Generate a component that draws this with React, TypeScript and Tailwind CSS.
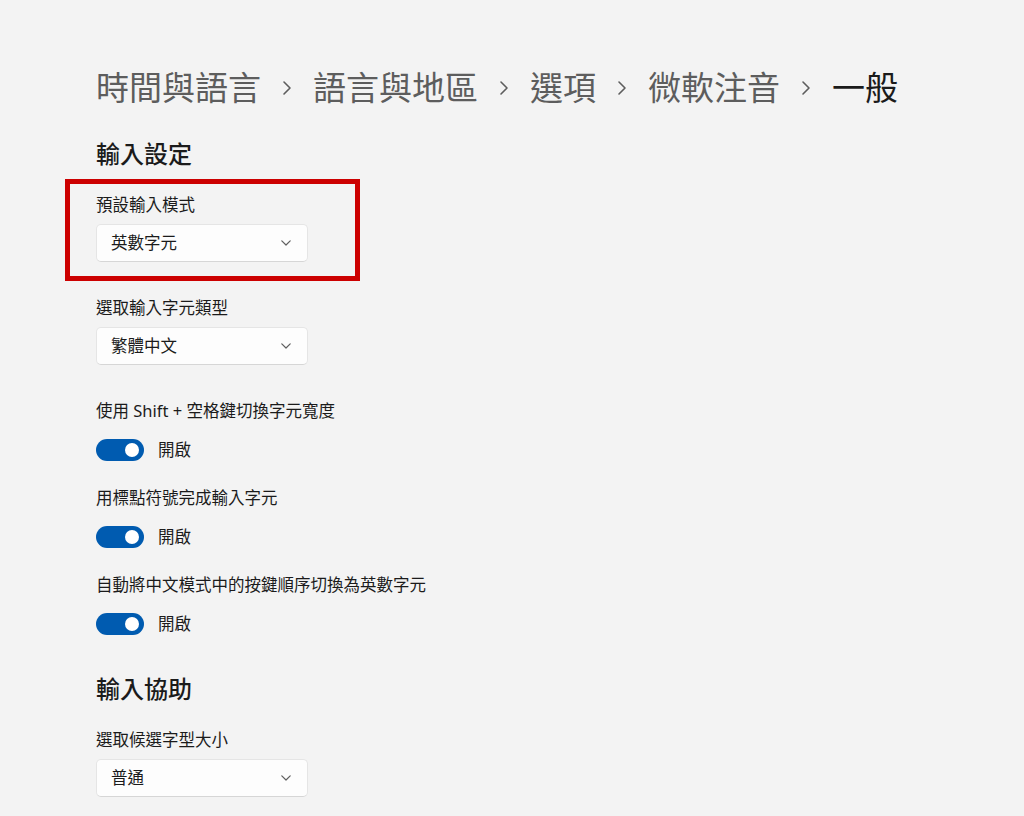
const font = "font-['Noto_Sans','Noto_Sans_CJK_TC',sans-serif]";

const Chevron = ({ className }: { className?: string }) => (
    <svg viewBox="0 0 10 16" className={className} fill="none" stroke="currentColor" strokeWidth="1.6" strokeLinecap="round" strokeLinejoin="round">
        <path d="M2 2l6 6-6 6" />
    </svg>
);

const Dropdown = ({ value }: { value: string }) => (
    <div className="mt-[7px] flex h-[38px] w-[212px] items-center justify-between rounded-[5px] border border-[#e5e5e5] border-b-[#d6d6d6] bg-[#fdfdfd] pl-[14px] pr-[16px]">
        <span className="text-[16.5px] leading-6 text-[#1b1b1b]">{value}</span>
        <svg viewBox="0 0 10 6" className="h-[6px] w-[10px] text-[#5f5f5f]" fill="none" stroke="currentColor" strokeWidth="1.2" strokeLinecap="round" strokeLinejoin="round">
            <path d="M0.8 0.8L5 5l4.2-4.2" />
        </svg>
    </div>
);

const Toggle = ({ label, mt }: { label: string; mt: string }) => (
    <div className={mt}>
        <p className="text-[16.5px] leading-6 text-[#1b1b1b]">{label}</p>
        <div className="mt-4 flex h-[22px] items-center gap-[14px]">
            <div className="flex h-[22px] w-[48px] items-center justify-end rounded-full bg-[#005bb0] pr-[5px]">
                <div className="h-[14px] w-[14px] rounded-full bg-white" />
            </div>
            <span className="text-[16.5px] leading-[22px] text-[#1b1b1b]">開啟</span>
        </div>
    </div>
);

const crumbs = ['時間與語言', '語言與地區', '選項', '微軟注音'];

export default function App() {
    return (
        <div className={`min-h-screen bg-[#f3f3f3] pl-24 pt-[68px] ${font}`}>
            <div className="flex items-center text-[33px] leading-10">
                {crumbs.map((c) => (
                    <div key={c} className="flex items-center">
                        <span className="text-[#5d5d5d]">{c}</span>
                        <Chevron className="mx-[21px] h-[16px] w-[10px] text-[#5d5d5d]" />
                    </div>
                ))}
                <span className="text-[#1b1b1b]">一般</span>
            </div>

            <h2 className="mt-[30px] text-[24px] font-medium leading-8 text-[#1b1b1b]">輸入設定</h2>

            <div className="relative mt-[23px] w-fit">
                <div className="absolute left-[-31px] top-[-14px] h-[102px] w-[295px] border-[5px] border-[#cc0000]" />
                <p className="text-[16.5px] leading-6 text-[#1b1b1b]">預設輸入模式</p>
                <Dropdown value="英數字元" />
            </div>

            <div className="mt-[34px]">
                <p className="text-[16.5px] leading-6 text-[#1b1b1b]">選取輸入字元類型</p>
                <Dropdown value="繁體中文" />
            </div>

            <Toggle mt="mt-[34px]" label="使用 Shift + 空格鍵切換字元寬度" />
            <Toggle mt="mt-[25px]" label="用標點符號完成輸入字元" />
            <Toggle mt="mt-[25px]" label="自動將中文模式中的按鍵順序切換為英數字元" />

            <h2 className="mt-[38px] text-[24px] font-medium leading-8 text-[#1b1b1b]">輸入協助</h2>

            <div className="mt-[23px]">
                <p className="text-[16.5px] leading-6 text-[#1b1b1b]">選取候選字型大小</p>
                <Dropdown value="普通" />
            </div>
        </div>
    );
}
